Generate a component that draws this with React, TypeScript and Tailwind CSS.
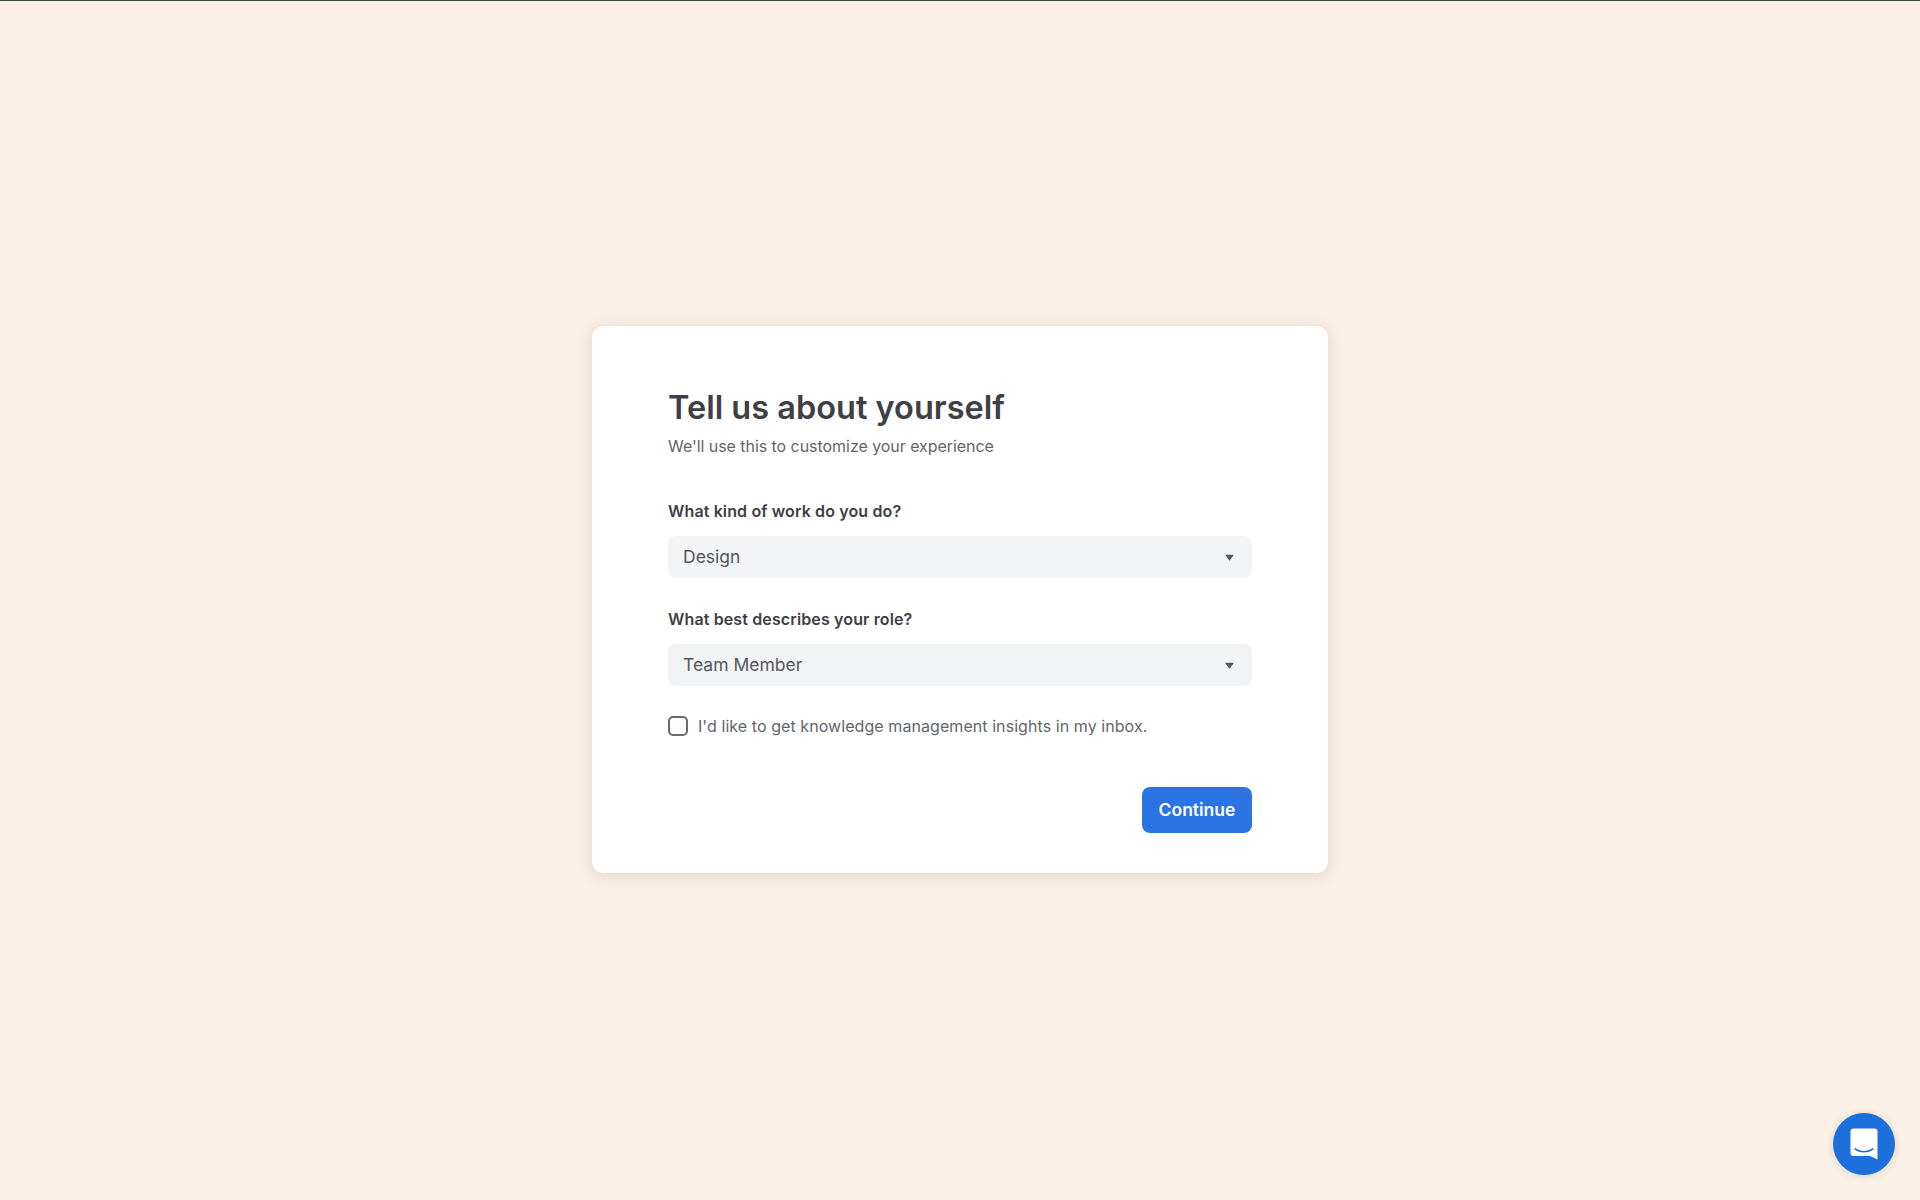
import React from 'react';

const font = { fontFamily: 'Inter, sans-serif' };

const SelectField: React.FC<{ label: string; value: string }> = ({ label, value }) => (
  <div>
    <label className="block text-[16px] leading-[24px] font-semibold tracking-[0.13px] text-[#3f4045]">{label}</label>
    <div className="mt-[13px] flex h-[42px] items-center justify-between rounded-[8px] bg-[#f3f4f6] pl-[15px] pr-[18px]">
      <span className="text-[17.5px] text-[#55575d]">{value}</span>
      <svg width="9" height="7" viewBox="0 0 9 7" className="text-[#55575d]">
        <path d="M1 0.8h7a.5.5 0 0 1 .4.8L4.9 6.2a.5.5 0 0 1-.8 0L.6 1.6A.5.5 0 0 1 1 .8z" fill="currentColor" />
      </svg>
    </div>
  </div>
);

export default function App() {
  return (
    <div style={font} className="relative flex h-[1200px] flex-col overflow-hidden bg-[#faf0e6]">
      <div className="h-px bg-[#3d4a3c]" />
      <div className="flex flex-1 items-start justify-center pt-[325px]">
        <div className="flex h-[547px] w-[736px] flex-col rounded-[12px] bg-white px-[76px] pt-[62px] shadow-[0_2px_16px_rgba(120,90,60,0.18)]">
          <h1 className="text-[32.5px] leading-[40px] font-semibold text-[#3f4045]">Tell us about yourself</h1>
          <p className="mt-[6px] text-[16px] leading-[24px] tracking-[-0.05px] text-[#63656b]">We'll use this to customize your experience</p>
          <div className="mt-[41px] flex flex-col gap-[29px]">
            <SelectField label="What kind of work do you do?" value="Design" />
            <SelectField label="What best describes your role?" value="Team Member" />
          </div>
          <label className="mt-[28px] flex items-center gap-[10px]">
            <span className="h-[20px] w-[20px] rounded-[5px] border-2 border-[#666a72]" />
            <span className="text-[16px] leading-[24px] tracking-[0.07px] text-[#63656b]">I'd like to get knowledge management insights in my inbox.</span>
          </label>
          <div className="mt-[49px] flex justify-end">
            <button className="h-[46px] w-[110px] rounded-[8px] bg-[#2b74e2] text-[17.5px] font-semibold text-white">Continue</button>
          </div>
        </div>
      </div>
      <div className="absolute bottom-[25px] right-[25px] flex h-[62px] w-[62px] items-center justify-center rounded-full bg-[#1d6fdc] shadow-[0_1px_8px_rgba(0,0,0,0.12)]">
        <svg width="28" height="32" viewBox="0 0 28 32">
          <path d="M3.5 .5h21a3 3 0 0 1 3 3V31.5l-7.5-3.5H3.5a3 3 0 0 1-3-3V3.5a3 3 0 0 1 3-3z" fill="#fff" />
          <path d="M5 21c5.5 3.4 12.5 3.4 18 0" fill="none" stroke="#1d6fdc" strokeWidth="1.5" strokeLinecap="round" />
        </svg>
      </div>
    </div>
  );
}
